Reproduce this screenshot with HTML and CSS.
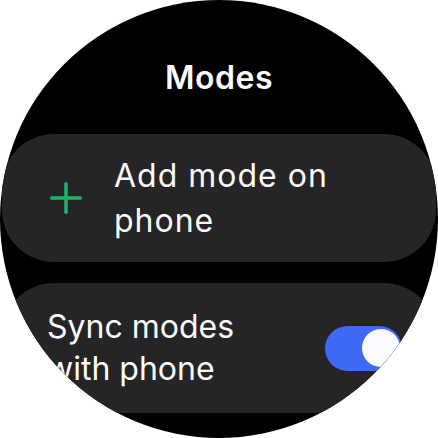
FILE: index.html
```html
<!DOCTYPE html>
<html>
<head>
<meta charset="utf-8">
<link rel="stylesheet" href="styles.css">
</head>
<body>
<div class="watch">
  <h1 class="title">Modes</h1>
  <div class="list">
    <div class="card card-add">
      <svg class="plus" width="32" height="32" viewBox="0 0 32 32">
        <line x1="1.75" y1="16" x2="30.25" y2="16" />
        <line x1="16" y1="1.75" x2="16" y2="30.25" />
      </svg>
      <div class="label label-add">Add mode on phone</div>
    </div>
    <div class="card card-sync">
      <div class="label label-sync">Sync modes with phone</div>
      <div class="toggle"><div class="knob"></div></div>
    </div>
  </div>
</div>
</body>
</html>
```

FILE: styles.css
```css
html, body {
  margin: 0;
  padding: 0;
  background: #ffffff;
}
.watch {
  width: 438px;
  height: 438px;
  border-radius: 50%;
  background: #000;
  overflow: hidden;
  box-sizing: border-box;
  padding-top: 58px;
  font-family: Inter, "Noto Sans", sans-serif;
  color: #fafafa;
}
.title {
  margin: 0;
  height: 40px;
  line-height: 40px;
  font-size: 32px;
  font-weight: 600;
  letter-spacing: 0.5px;
  text-align: center;
}
.list {
  margin-top: 36px;
  padding: 0 2px;
  display: flex;
  flex-direction: column;
  gap: 21px;
}
.card {
  background: #252527;
  border-radius: 52px;
  display: flex;
  align-items: center;
  box-sizing: border-box;
}
.card-add {
  height: 128px;
  padding-left: 48px;
  gap: 32px;
}
.plus {
  flex: none;
}
.plus line {
  stroke: #1fb26a;
  stroke-width: 3.5;
  stroke-linecap: round;
}
.label {
  font-size: 32px;
  font-weight: 400;
}
.label-add {
  line-height: 45px;
  letter-spacing: 1px;
  width: 240px;
}
.card-sync {
  height: 130px;
  padding-left: 45px;
  padding-right: 34px;
  justify-content: space-between;
}
.label-sync {
  line-height: 42px;
  width: 220px;
}
.toggle {
  flex: none;
  width: 77px;
  height: 45px;
  border-radius: 23px;
  background: #3f6af6;
  position: relative;
}
.knob {
  position: absolute;
  right: 2px;
  top: 3.5px;
  width: 38px;
  height: 38px;
  border-radius: 50%;
  background: #fafbff;
}
```
